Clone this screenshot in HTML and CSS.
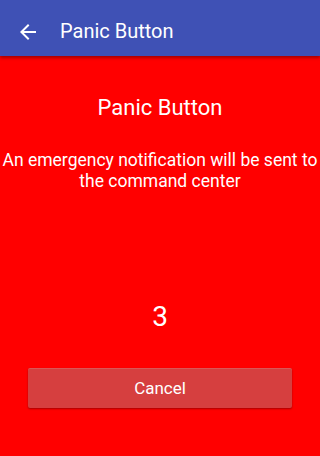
FILE: index.html
```html
<!DOCTYPE html>
<html lang="en">
<head>
<meta charset="UTF-8" />
<meta name="viewport" content="width=device-width, initial-scale=1" />
<title>Panic Button</title>
<link rel="stylesheet" href="styles.css">
</head>
<body>

<div class="barra">
  <button class="voltar" aria-label="Back">
    <svg width="24" height="24" viewBox="0 0 24 24"><path d="M20 11H7.83l5.59-5.59L12 4l-8 8 8 8 1.41-1.41L7.83 13H20v-2z" fill="#fff"/></svg>
  </button>
  <div class="titulo">Panic Button</div>
</div>

<div class="conteudo">
  <div class="cabecalho">Panic Button</div>
  <div class="aviso">An emergency notification will be sent to the command center</div>
  <div id="contador" class="contador">3</div>
  <button class="cancelar">Cancel</button>
</div>

</body>
</html>
```

FILE: styles.css
```css
* {
  box-sizing: border-box;
}
body {
  margin: 0;
  height: 456px;
  background: #ff0000;
  color: #fff;
  font-family: Roboto, 'Noto Sans', sans-serif;
  display: flex;
  flex-direction: column;
  overflow: hidden;
}
.barra {
  height: 56px;
  background: #3f51b5;
  display: flex;
  align-items: center;
  padding-left: 16px;
  box-shadow: 0 2px 3px rgba(0, 0, 0, 0.35);
  position: relative;
  z-index: 1;
}
.voltar {
  width: 24px;
  height: 24px;
  padding: 0;
  border: none;
  background: none;
  display: flex;
  margin-top: 7px;
}
.titulo {
  margin-left: 20px;
  font-size: 20px;
  margin-top: 6px;
}
.conteudo {
  flex: 1;
  display: flex;
  flex-direction: column;
  align-items: center;
  text-align: center;
  padding-top: 38px;
}
.cabecalho {
  font-size: 22px;
  line-height: 28px;
}
.aviso {
  font-size: 17.5px;
  line-height: 21px;
  margin-top: 28px;
  width: 320px;
}
.contador {
  font-size: 28px;
  line-height: 34px;
  margin-top: 108px;
}
.cancelar {
  margin-top: 34px;
  width: 264px;
  height: 40px;
  border: none;
  border-radius: 2px;
  background: #d63f3f;
  color: #fff;
  font-family: inherit;
  font-size: 17px;
  box-shadow: 0 1px 2px rgba(0, 0, 0, 0.35), inset 0 1px 0 rgba(255, 255, 255, 0.12);
}
```
